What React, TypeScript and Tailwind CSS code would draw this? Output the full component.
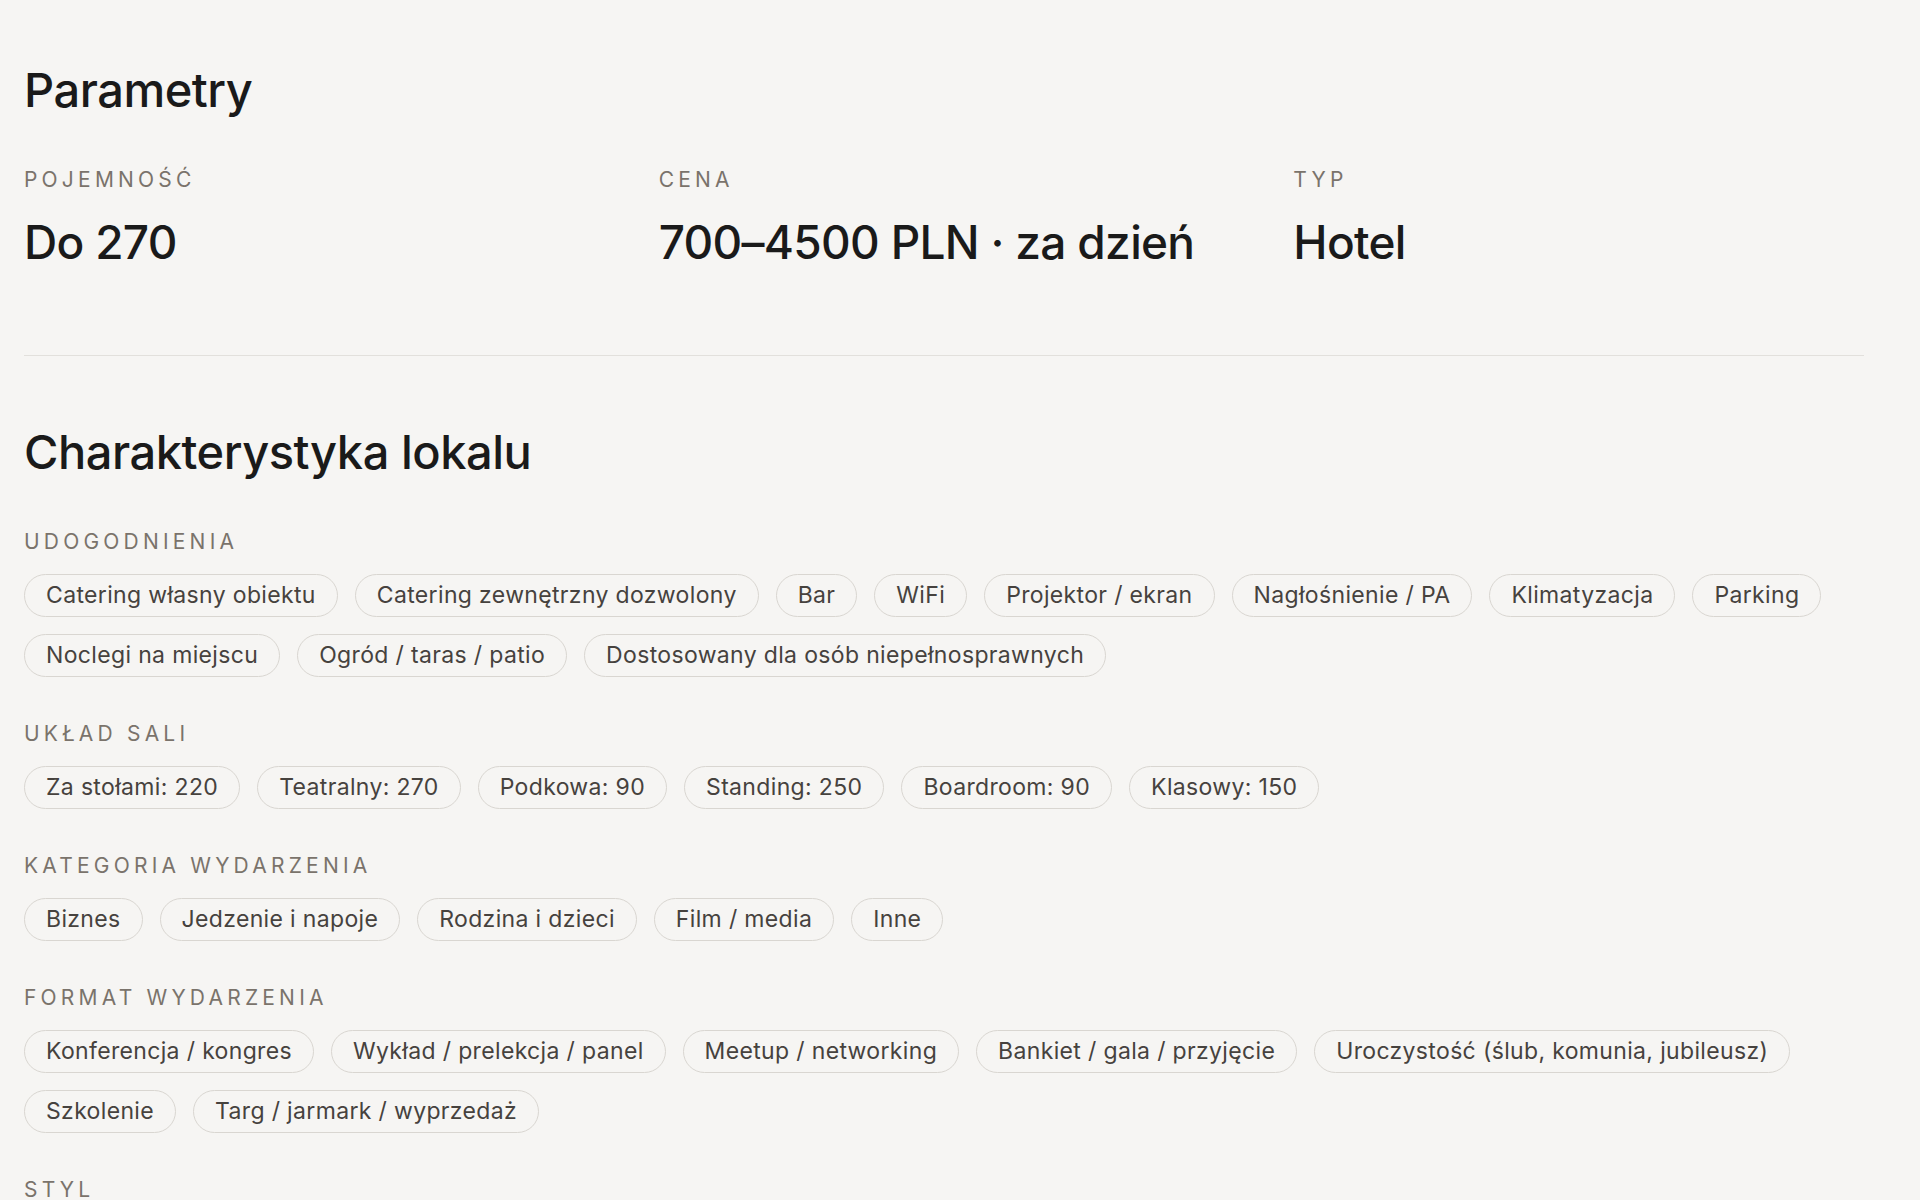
const PARAMS = [
  { label: "Pojemność", value: "Do 270" },
  { label: "Cena", value: "700–4500 PLN · za dzień" },
  { label: "Typ", value: "Hotel" },
];

const GROUPS = [
  {
    label: "Udogodnienia",
    items: [
      "Catering własny obiektu",
      "Catering zewnętrzny dozwolony",
      "Bar",
      "WiFi",
      "Projektor / ekran",
      "Nagłośnienie / PA",
      "Klimatyzacja",
      "Parking",
      "Noclegi na miejscu",
      "Ogród / taras / patio",
      "Dostosowany dla osób niepełnosprawnych",
    ],
  },
  {
    label: "Układ sali",
    items: [
      "Za stołami: 220",
      "Teatralny: 270",
      "Podkowa: 90",
      "Standing: 250",
      "Boardroom: 90",
      "Klasowy: 150",
    ],
  },
  {
    label: "Kategoria wydarzenia",
    items: ["Biznes", "Jedzenie i napoje", "Rodzina i dzieci", "Film / media", "Inne"],
  },
  {
    label: "Format wydarzenia",
    items: [
      "Konferencja / kongres",
      "Wykład / prelekcja / panel",
      "Meetup / networking",
      "Bankiet / gala / przyjęcie",
      "Uroczystość (ślub, komunia, jubileusz)",
      "Szkolenie",
      "Targ / jarmark / wyprzedaż",
    ],
  },
  { label: "Styl", items: [] },
];

function Label({ children }: { children: string }) {
  return (
    <p className="text-[21px] leading-[24px] uppercase tracking-[0.2em] text-[#7a736b]">
      {children}
    </p>
  );
}

function Chip({ children }: { children: string }) {
  return (
    <span className="inline-flex items-center h-[43px] px-[21px] rounded-full border-[1.5px] border-[#d9d6d1] text-[23px] tracking-[0.015em] text-[#46423e] whitespace-nowrap">
      {children}
    </span>
  );
}

export default function App() {
  return (
    <div className="min-h-screen bg-[#f6f5f3] font-['Inter',sans-serif] antialiased">
      <div className="w-[1840px] ml-6 pt-[62px]">
        {/* Parametry */}
        <section className="pb-[88px] border-b-[1.5px] border-[#e2e0dc]">
          <h2 className="text-[47px] leading-[56px] font-medium tracking-[-0.01em] text-[#1a1a1a]">
            Parametry
          </h2>
          <div className="grid grid-cols-3 gap-16 mt-[50px]">
            {PARAMS.map((p) => (
              <div key={p.label}>
                <Label>{p.label}</Label>
                <p className="mt-[25px] text-[46px] leading-[50px] font-medium tracking-[-0.015em] text-[#1a1a1a]">
                  {p.value}
                </p>
              </div>
            ))}
          </div>
        </section>

        {/* Charakterystyka */}
        <section className="pt-[68px]">
          <h2 className="text-[47px] leading-[56px] font-medium tracking-[-0.01em] text-[#1a1a1a]">
            Charakterystyka lokalu
          </h2>
          <div className="mt-[50px] flex flex-col gap-[45px]">
            {GROUPS.map((g) => (
              <div key={g.label}>
                <Label>{g.label}</Label>
                {g.items.length > 0 && (
                  <div className="mt-[20px] flex flex-wrap gap-x-[17px] gap-y-[17px]">
                    {g.items.map((it) => (
                      <Chip key={it}>{it}</Chip>
                    ))}
                  </div>
                )}
              </div>
            ))}
          </div>
        </section>
      </div>
    </div>
  );
}
